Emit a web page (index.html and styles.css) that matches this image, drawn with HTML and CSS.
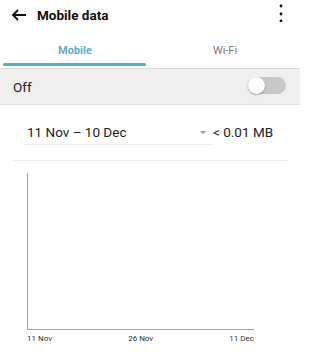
FILE: index.html
```
<!DOCTYPE html>
<html>
<head>
<meta charset="utf-8">
<link rel="stylesheet" href="styles.css">
</head>
<body>
<div class="header">
  <svg class="back" width="16" height="14" viewBox="0 0 16 14"><path d="M15 7H2M7 2L2 7L7 12" fill="none" stroke="#111" stroke-width="1.8"/></svg>
  <div class="title">Mobile data</div>
  <svg class="menu" width="6" height="22" viewBox="0 0 6 22"><circle cx="3" cy="6" r="1.4" fill="#111"/><circle cx="3" cy="14" r="1.4" fill="#111"/><circle cx="3" cy="21" r="1.4" fill="#111"/></svg>
</div>
<div class="tabs">
  <div class="tab active"><span class="label">Mobile</span><div class="bar"></div></div>
  <div class="tab"><span class="label">Wi-Fi</span><div class="bar"></div></div>
</div>
<div class="offrow">
  <span class="off">Off</span>
  <div class="toggle"><div class="knob"></div></div>
</div>
<div class="daterow">
  <div class="dropdown"><span>11 Nov – 10 Dec</span><span class="tri"></span></div>
  <span class="usage">&lt; 0.01 MB</span>
</div>
<div class="sep"></div>
<div class="chart">
  <div class="plot"></div>
  <div class="xlabels"><span>11 Nov</span><span>26 Nov</span><span>11 Dec</span></div>
</div>
</body>
</html>
```
FILE: styles.css
```
html, body { margin: 0; padding: 0; background: #fff; }
body { font-family: Roboto, "Noto Sans", sans-serif; color: #222; width: 300px; height: 352px; overflow: hidden; }
.header { height: 30px; display: flex; align-items: center; }
.back { margin-left: 11px; }
.title { margin-left: 10px; font-size: 13.5px; font-weight: 700; color: #111; line-height: 16px; }
.menu { margin-left: auto; margin-right: 16px; align-self: flex-start; }
.tabs { display: flex; height: 38px; border-bottom: 1px solid #dcdcdc; }
.tab { flex: 1; display: flex; flex-direction: column; align-items: center; padding-top: 14px; }
.label { font-size: 11px; line-height: 13px; color: #7a7a7a; }
.tab.active .label { color: #62b0bf; font-weight: 700; }
.bar { align-self: stretch; margin: 6px 4px 0 3px; height: 3px; border-radius: 2px; }
.tab.active .bar { background: #5aadbd; }
.offrow { height: 35px; background: #efefef; border-bottom: 1px solid #e0e0e0; display: flex; align-items: center; padding: 0 14px 0 13px; }
.off { font-size: 13.5px; line-height: 16px; color: #222; }
.toggle { margin-left: auto; width: 38px; height: 17px; border-radius: 9px; background: #c8c8c8; position: relative; margin-top: -2px; }
.knob { position: absolute; left: 0; top: 0; width: 17px; height: 17px; border-radius: 50%; background: #fff; box-shadow: 0 1px 2px rgba(0,0,0,0.3); }
.daterow { display: flex; align-items: flex-start; margin: 19px 0 0 25px; }
.dropdown { width: 186px; padding-left: 2px; padding-bottom: 4px; border-bottom: 1px solid #ececec; display: flex; align-items: center; font-size: 13.5px; line-height: 16px; color: #222; }
.tri { margin-left: auto; margin-right: 7px; width: 0; height: 0; border-left: 3px solid transparent; border-right: 3px solid transparent; border-top: 3px solid #999; }
.usage { font-size: 13.5px; line-height: 16px; color: #222; }
.sep { margin: 15px 13px 0 13px; height: 1px; background: #ececec; }
.chart { margin: 12px 0 0 27px; width: 227px; }
.plot { height: 156px; border-left: 1px solid #9e9e9e; border-bottom: 1px solid #9e9e9e; }
.xlabels { display: flex; justify-content: space-between; font-size: 8px; line-height: 10px; color: #333; margin-top: 4px; }
```
